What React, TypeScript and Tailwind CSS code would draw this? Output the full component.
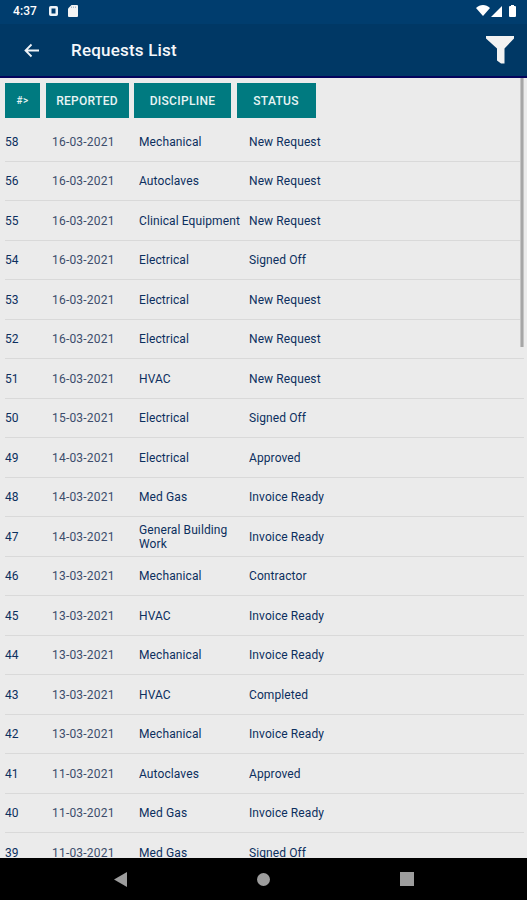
import React from 'react';

interface Request {
  id: number;
  reported: string;
  discipline: string;
  status: string;
}

const requests: Request[] = [
  { id: 58, reported: '16-03-2021', discipline: 'Mechanical', status: 'New Request' },
  { id: 56, reported: '16-03-2021', discipline: 'Autoclaves', status: 'New Request' },
  { id: 55, reported: '16-03-2021', discipline: 'Clinical Equipment', status: 'New Request' },
  { id: 54, reported: '16-03-2021', discipline: 'Electrical', status: 'Signed Off' },
  { id: 53, reported: '16-03-2021', discipline: 'Electrical', status: 'New Request' },
  { id: 52, reported: '16-03-2021', discipline: 'Electrical', status: 'New Request' },
  { id: 51, reported: '16-03-2021', discipline: 'HVAC', status: 'New Request' },
  { id: 50, reported: '15-03-2021', discipline: 'Electrical', status: 'Signed Off' },
  { id: 49, reported: '14-03-2021', discipline: 'Electrical', status: 'Approved' },
  { id: 48, reported: '14-03-2021', discipline: 'Med Gas', status: 'Invoice Ready' },
  { id: 47, reported: '14-03-2021', discipline: 'General Building Work', status: 'Invoice Ready' },
  { id: 46, reported: '13-03-2021', discipline: 'Mechanical', status: 'Contractor' },
  { id: 45, reported: '13-03-2021', discipline: 'HVAC', status: 'Invoice Ready' },
  { id: 44, reported: '13-03-2021', discipline: 'Mechanical', status: 'Invoice Ready' },
  { id: 43, reported: '13-03-2021', discipline: 'HVAC', status: 'Completed' },
  { id: 42, reported: '13-03-2021', discipline: 'Mechanical', status: 'Invoice Ready' },
  { id: 41, reported: '11-03-2021', discipline: 'Autoclaves', status: 'Approved' },
  { id: 40, reported: '11-03-2021', discipline: 'Med Gas', status: 'Invoice Ready' },
  { id: 39, reported: '11-03-2021', discipline: 'Med Gas', status: 'Signed Off' },
];

const StatusBar = () => (
  <div className="flex h-6 shrink-0 items-center bg-[#003d6e] pb-[2px] pl-[13px] pr-[11px] text-white">
    <span className="w-[36px] text-xs font-medium leading-none tracking-[0.1px]">4:37</span>
    <svg width="9" height="10" viewBox="0 0 9 10" fill="none">
      <rect x="1.25" y="1.25" width="6.5" height="7.5" rx="0.5" stroke="#eef3f8" strokeWidth="2.5" />
      <rect x="3.7" y="4.2" width="1.6" height="1.6" fill="#003d6e" />
    </svg>
    <svg className="ml-[10px]" width="10" height="12" viewBox="0 0 10 12">
      <path d="M3.5 0H9a1 1 0 0 1 1 1v10a1 1 0 0 1-1 1H1a1 1 0 0 1-1-1V3.5z" fill="#f4f4f4" />
      <path d="M3.5 1.5v1.5M5.5 1.5v1.5M7.5 1.5v1.5" stroke="#8aa4bd" strokeWidth="0.7" />
    </svg>
    <div className="ml-auto flex items-end">
      <svg className="mb-px" width="14" height="11" viewBox="0 0 14 11" fill="#fff">
        <path d="M0 3C4 -1 10 -1 14 3L7 11z" />
      </svg>
      <svg className="ml-[1px]" width="11" height="11" viewBox="0 0 11 11" fill="#fff">
        <path d="M11 0v11H0z" />
      </svg>
      <svg className="ml-[7px]" width="7" height="12" viewBox="0 0 7 12" fill="#fff">
        <path d="M2 0h3v1h1a1 1 0 0 1 1 1V11a1 1 0 0 1-1 1H1a1 1 0 0 1-1-1V2a1 1 0 0 1 1-1h1z" />
      </svg>
    </div>
  </div>
);

const AppBar = () => (
  <div className="flex h-[54px] shrink-0 items-center border-b-2 border-[#04045c] bg-[#003865] pl-6 pr-3">
    <svg width="16" height="15" viewBox="0 0 16 15" fill="none" stroke="#eef3f8" strokeWidth="1.8">
      <path d="M15 7.5H2M7.5 1.5L1.5 7.5L7.5 13.5" />
    </svg>
    <h1 className="ml-[31px] pt-px text-[17px] font-medium leading-none tracking-[0.2px] text-[#f4f7fa]">Requests List</h1>
    <svg className="ml-auto" width="30" height="30" viewBox="0 0 30 30" fill="#f2f2f2">
      <path d="M1 1h28v2.5L19.5 13.5V28.5h-3.5L12 25.5V13.5L1 3.5z" />
    </svg>
  </div>
);

const headerButton = 'flex h-[35px] items-center justify-center bg-[#007a80] pt-px text-xs font-medium tracking-[0.3px] text-[#e8f4f4]';

const SortButtons = () => (
  <div className="flex h-[44px] gap-[5.5px] pl-[5px] pt-[4.5px]">
    <button className={`${headerButton} w-[35px]`}>
      <span className="text-[10px] tracking-[0.5px]">#&gt;</span>
    </button>
    <button className={`${headerButton} w-[83px]`}>REPORTED</button>
    <button className={`${headerButton} w-[97px]`}>DISCIPLINE</button>
    <button className={`${headerButton} w-[79px]`}>STATUS</button>
  </div>
);

const RequestRow = ({ request }: { request: Request }) => (
  <div className="ml-[5px] mr-[3px] flex h-[39.5px] items-center border-b border-[#d9d9d9] pt-px text-xs leading-[14px] tracking-[0.1px] text-[#0c2f5e]">
    <span className="w-[47px]">{request.id}</span>
    <span className="w-[87px] tracking-[0.2px] text-[#3c4d6c]">{request.reported}</span>
    <span className="w-[110px] pr-[4px]">{request.discipline}</span>
    <span>{request.status}</span>
  </div>
);

const NavBar = () => (
  <div className="flex h-[42px] shrink-0 items-center bg-black pl-[114px] pr-[113px]">
    <svg width="13" height="15" viewBox="0 0 13 15" fill="#9d9d9d">
      <path d="M13 0v15L0 7.5z" />
    </svg>
    <div className="ml-[130px] h-[13px] w-[13px] rounded-full bg-[#9d9d9d]" />
    <div className="ml-auto h-[14px] w-[14px] bg-[#9d9d9d]" />
  </div>
);

export default function App() {
  return (
    <div className="flex h-[900px] w-[527px] flex-col overflow-hidden bg-[#ebebeb] font-['Roboto',sans-serif]">
      <StatusBar />
      <AppBar />
      <div className="relative min-h-0 flex-1 overflow-hidden">
        <SortButtons />
        {requests.map((request) => (
          <RequestRow key={request.id} request={request} />
        ))}
        {/* Scrollbar thumb */}
        <div className="absolute right-[3px] top-0 h-[269px] w-[4px] border-x border-[#c4c4c4] bg-[#a6a6a6]" />
      </div>
      <NavBar />
    </div>
  );
}
